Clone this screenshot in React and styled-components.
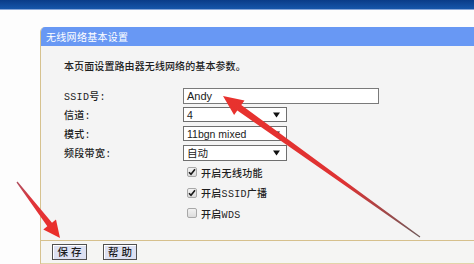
import React from "react";
import styled, { createGlobalStyle } from "styled-components";

const Global = createGlobalStyle`
  html, body { margin: 0; padding: 0; background: #fdfdfd; }
  body { font-family: "Noto Sans CJK SC", "Liberation Sans", sans-serif; }
`;

const Page = styled.div`
  position: relative;
  width: 474px;
  height: 264px;
  overflow: hidden;
  background: #fdfdfd;
`;

const TopBar = styled.div`
  height: 9px;
  background: linear-gradient(#0a3c88, #1656aa);
  border-bottom: 1px solid #8aa8d8;
`;

const Main = styled.div`
  padding: 17px 0 0 40px;
`;

const Panel = styled.div`
  display: flex;
  flex-direction: column;
  height: 237px;
  border-left: 1px solid #d6c28f;
  border-top-left-radius: 5px;
  overflow: hidden;
`;

const Header = styled.div`
  height: 19px;
  line-height: 19px;
  padding-left: 5px;
  background: #6898f4;
  color: #ffffff;
  font-size: 10px;
  letter-spacing: 0.3px;
`;

const Body = styled.div`
  flex: 1;
  background: #f4f4f4;
  padding: 12px 0 0 23px;
`;

const Intro = styled.div`
  height: 16px;
  line-height: 16px;
  font-size: 10px;
  font-weight: 500;
  letter-spacing: 0.1px;
  color: #1e1e1e;
`;

const Form = styled.div`
  display: grid;
  grid-template-columns: 119px auto;
  grid-auto-rows: 19px;
  align-items: center;
  margin-top: 12px;
`;

const Label = styled.div`
  font-family: "Liberation Mono", "Noto Sans CJK SC", monospace;
  font-size: 10px;
  font-weight: 500;
  letter-spacing: 0.3px;
  color: #1e1e1e;
`;

const TextBox = styled.div`
  box-sizing: border-box;
  width: 196px;
  height: 16px;
  border: 1px solid #7a7a7a;
  background: #ffffff;
  padding-left: 3px;
  font-family: "Liberation Sans", "Noto Sans CJK SC", sans-serif;
  font-size: 11px;
  line-height: 14px;
  color: #222;
`;

const Select = styled.div`
  box-sizing: border-box;
  display: flex;
  align-items: center;
  justify-content: space-between;
  width: 104px;
  height: ${p => p.$h || 15}px;
  border: 1px solid #6f6f6f;
  background: #ffffff;
  padding: 0 6px 0 3px;
  font-family: "Liberation Sans", "Noto Sans CJK SC", sans-serif;
  font-size: 10.5px;
  color: #222;
`;

const Checks = styled.div`
  display: grid;
  grid-auto-rows: 20.5px;
  align-items: center;
  padding-left: 123px;
`;

const CheckRow = styled.div`
  display: flex;
  align-items: center;
  gap: 4px;
  font-family: "Liberation Mono", "Noto Sans CJK SC", monospace;
  font-size: 10px;
  font-weight: 500;
  letter-spacing: 0.3px;
  color: #1e1e1e;
`;

const Box = styled.span`
  box-sizing: border-box;
  display: flex;
  align-items: center;
  justify-content: center;
  width: 10px;
  height: 10px;
  border: 1px solid #a8a8a8;
  border-radius: 2px;
  background: linear-gradient(#f2f2f2, #dcdcdc);
`;

const Footer = styled.div`
  box-sizing: border-box;
  height: 24px;
  display: flex;
  align-items: flex-start;
  gap: 16px;
  padding: 3px 0 0 11px;
  background: #f5f5f3;
  border-top: 1px solid #d6c08c;
  border-bottom: 1px solid #e2d4a8;
`;

const Button = styled.button`
  box-sizing: border-box;
  width: ${p => p.$w}px;
  height: 16px;
  padding: 0 0 0 3px;
  border: 1px solid #505050;
  box-shadow: inset 1px 1px 0 #ffffff;
  background: #dde1f2;
  font-family: "Noto Sans CJK SC", sans-serif;
  font-size: 10.5px;
  font-weight: 500;
  letter-spacing: 3px;
  line-height: 14px;
  color: #1e1e1e;
`;

const Overlay = styled.svg`
  position: absolute;
  left: 0;
  top: 0;
  pointer-events: none;
`;

const Tri = () => (
  <svg width="7" height="6" viewBox="0 0 7 6">
    <path d="M0 0.5 H7 L3.5 5.5 Z" fill="#111" />
  </svg>
);

const Check = () => (
  <svg width="8" height="8" viewBox="0 0 8 8">
    <path d="M1 4.2 L3 6.3 L7 1.2" stroke="#1a1a1a" strokeWidth="1.6" fill="none" />
  </svg>
);

const fields = [
  { label: "SSID号:", kind: "text", value: "Andy" },
  { label: "信道:", kind: "select", value: "4", h: 15 },
  { label: "模式:", kind: "select", value: "11bgn mixed", h: 15 },
  { label: "频段带宽:", kind: "select", value: "自动", h: 16 },
];

const checks = [
  { text: "开启无线功能", on: true },
  { text: "开启SSID广播", on: true },
  { text: "开启WDS", on: false },
];

export default function App() {
  return (
    <Page>
      <Global />
      <TopBar />
      <Main>
        <Panel>
          <Header>无线网络基本设置</Header>
          <Body>
            <Intro>本页面设置路由器无线网络的基本参数。</Intro>
            <Form>
              {fields.map(f => (
                <React.Fragment key={f.label}>
                  <Label>{f.label}</Label>
                  {f.kind === "text" ? (
                    <TextBox>{f.value}</TextBox>
                  ) : (
                    <Select $h={f.h}>
                      <span>{f.value}</span>
                      <Tri />
                    </Select>
                  )}
                </React.Fragment>
              ))}
            </Form>
            <Checks>
              {checks.map(c => (
                <CheckRow key={c.text}>
                  <Box>{c.on && <Check />}</Box>
                  <span>{c.text}</span>
                </CheckRow>
              ))}
            </Checks>
          </Body>
          <Footer>
            <Button $w={35}>保存</Button>
            <Button $w={34}>帮助</Button>
          </Footer>
        </Panel>
      </Main>
      <Overlay width="474" height="264" viewBox="0 0 474 264">
        <defs>
          <linearGradient id="g1" gradientUnits="userSpaceOnUse" x1="230" y1="105" x2="420" y2="237">
            <stop offset="0" stopColor="#e8322e" />
            <stop offset="0.6" stopColor="#de3233" />
            <stop offset="1" stopColor="#6e5a5a" />
          </linearGradient>
          <linearGradient id="g2" gradientUnits="userSpaceOnUse" x1="17" y1="182" x2="55" y2="230">
            <stop offset="0" stopColor="#b05060" />
            <stop offset="0.4" stopColor="#e0343a" />
            <stop offset="1" stopColor="#ea2f2b" />
          </linearGradient>
        </defs>
        <path
          d="M223 96 L244.5 100.4 L241.3 104.9 L420.35 236.5 L419.65 237.5 L237.3 110.6 L234.1 115 Z"
          fill="url(#g1)"
        />
        <path
          d="M60 238 L43.3 229.4 L47.3 226.3 L16.5 182.4 L17.5 181.6 L52 222.7 L56 219.6 Z"
          fill="url(#g2)"
        />
      </Overlay>
    </Page>
  );
}
